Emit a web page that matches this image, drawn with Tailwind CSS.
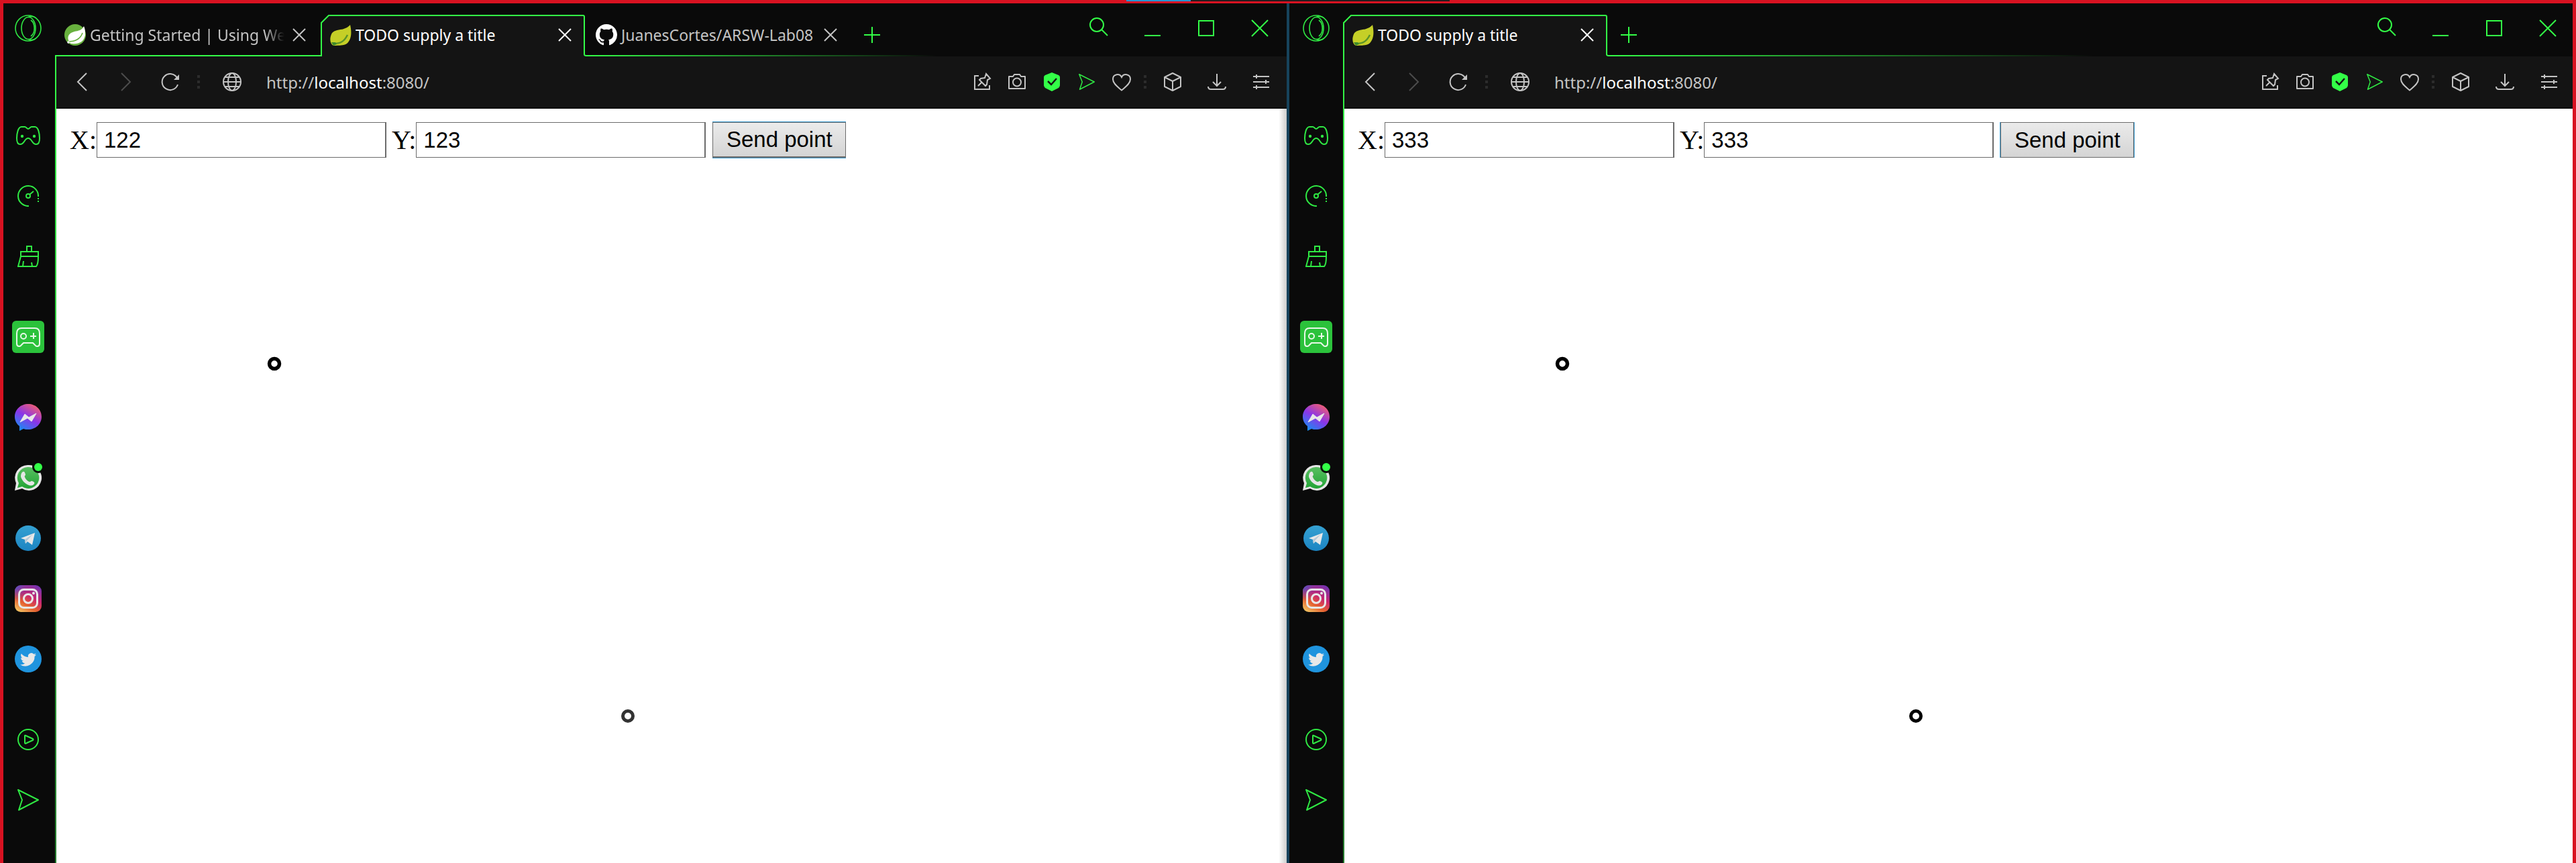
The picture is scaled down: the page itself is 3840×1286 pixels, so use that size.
<!DOCTYPE html>
<html lang="en">
<head>
<meta charset="utf-8">
<title>TODO supply a title</title>
<script src="https://cdn.jsdelivr.net/npm/@tailwindcss/browser@4"></script>
</head>
<body class="bg-[#0a0a0a]">
<svg class="absolute w-0 h-0" aria-hidden="true">
  <defs>
    <linearGradient id="msg" x1="0.2" y1="1" x2="0.8" y2="0"><stop offset="0" stop-color="#1292f5"/><stop offset=".5" stop-color="#8a35e8"/><stop offset="1" stop-color="#f8616a"/></linearGradient>
    <linearGradient id="wa" x1="0" y1="0" x2="0" y2="1"><stop offset="0" stop-color="#5abf62"/><stop offset="1" stop-color="#22a435"/></linearGradient>
    <linearGradient id="tg" x1="0" y1="0" x2="0" y2="1"><stop offset="0" stop-color="#35a1d2"/><stop offset="1" stop-color="#1c84c2"/></linearGradient>
    <linearGradient id="ig" x1="0.2" y1="1" x2="0.8" y2="0"><stop offset="0" stop-color="#f2c060"/><stop offset=".3" stop-color="#e5602f"/><stop offset=".6" stop-color="#c9266f"/><stop offset="1" stop-color="#7433b0"/></linearGradient>
    <radialGradient id="ig2" cx="0" cy="0" r=".6"><stop offset="0" stop-color="#3f5fd0"/><stop offset="1" stop-color="#7433b0" stop-opacity="0"/></radialGradient>
  </defs>
  <symbol id="i-opera" viewBox="0 0 40 40"><g fill="none" stroke="currentColor" stroke-width="1.6"><circle cx="20" cy="20" r="19"/><ellipse cx="20.500" cy="20" rx="10.500" ry="16.500"/><path d="M20 3.500c5-2 9-1 12 1.500M20 36.500c5 2 9 1 12-1.500M24 8c7 5 7 19 0 24"/></g></symbol>
  <symbol id="i-gx" viewBox="0 0 36 28"><path fill="none" stroke="currentColor" stroke-width="2" d="M8 1h5c2 0 3 3 5 3s3-3 5-3h5c5 0 7 10 7 17 0 6-2 9-5 9-7 0-6-9-12-9s-5 9-12 9c-3 0-5-3-5-9C1 11 3 1 8 1z"/><circle cx="9" cy="15" r="2.200" fill="currentColor"/><circle cx="27" cy="15" r="2.200" fill="currentColor"/></symbol>
  <symbol id="i-gauge" viewBox="0 0 32 32"><g fill="none" stroke="currentColor" stroke-width="2"><path d="M17 31A15 15 0 1 1 31 17"/><circle cx="16" cy="16" r="3"/><path d="M18 14l6-5M31 19v2M31 23v2"/></g></symbol>
  <symbol id="i-broom" viewBox="0 0 32 32"><g fill="none" stroke="currentColor" stroke-width="2"><path d="M14 9V1h7v8M5 16V9h26v7zM5 16L1 31h27c3-3 3-10 3-15M8 31l1-8M22 31l-1-6"/></g></symbol>
  <symbol id="i-pad" viewBox="0 0 36 29"><g fill="none" stroke="currentColor" stroke-width="2"><path d="M8 1h20c5 0 7 3 7 8v15c0 5-5 5-7 2l-3-3H11l-3 3c-2 3-7 3-7-2V9c0-5 2-8 7-8z"/><circle cx="11" cy="13" r="4"/><path d="M26 8v9M21 13h9"/></g></symbol>
  <symbol id="i-msg" viewBox="0 0 40 40"><path fill="url(#msg)" d="M20 0C9 0 0 8 0 19c0 6 3 11 7 14v7l6-3c2 1 5 1 7 1 11 0 20-8 20-19S31 0 20 0z"/><path d="M8 27l7-12 6 5 11-6-7 12-6-5z" fill="#e8e8e8" stroke="#e8e8e8" stroke-linejoin="round"/></symbol>
  <symbol id="i-wa" viewBox="0 0 42 42"><path fill="#e6e6e6" d="M20 4a19 19 0 0 0-17 27L1 42l11-3A19 19 0 1 0 20 4z"/><path fill="url(#wa)" d="M20 7A16 16 0 0 0 7 31l-2 7 7-2A16 16 0 1 0 20 7z"/><path fill="#e6e6e6" d="M13 14c2-1 3 0 4 4 0 2-2 2-1 4 1 3 4 6 7 7 2 0 2-2 4-1 3 1 4 2 3 4-2 3-5 3-8 2-6-2-11-8-12-13 0-3 1-6 3-7z"/><circle cx="36" cy="7" r="9" fill="#0a0a0a"/><circle cx="36" cy="7" r="6" fill="#33ff47"/></symbol>
  <symbol id="i-tg" viewBox="0 0 38 38"><circle cx="19" cy="19" r="19" fill="url(#tg)"/><path fill="#e8e8e8" d="M8 19l21-8-4 18-7-5-3 3-1-6z"/><path fill="#b8cad8" d="M14 21l12-8-9 10-2 4z"/></symbol>
  <symbol id="i-ig" viewBox="0 0 40 40"><rect width="40" height="40" rx="9" fill="url(#ig)"/><rect width="40" height="40" rx="9" fill="url(#ig2)"/><g fill="none" stroke="#e8e8e8" stroke-width="3"><rect x="6.500" y="6.500" width="27" height="27" rx="7"/><circle cx="20" cy="20" r="6.500"/></g><circle cx="28" cy="12" r="2" fill="#e8e8e8"/></symbol>
  <symbol id="i-tw" viewBox="0 0 40 40"><circle cx="20" cy="20" r="20" fill="#1f94de"/><path fill="#e8e8e8" transform="translate(8.500 8.500)" d="M23.600 4.900a9.700 9.700 0 0 1-2.800.8 4.900 4.900 0 0 0 2.200-2.700 9.900 9.900 0 0 1-3.100 1.200 4.900 4.900 0 0 0-8.400 4.500A14 14 0 0 1 1.300 3.500a4.900 4.900 0 0 0 1.500 6.600 4.900 4.900 0 0 1-2.200-.6 4.900 4.900 0 0 0 4 4.900 4.900 4.900 0 0 1-2.300.1 4.900 4.900 0 0 0 4.600 3.400A9.900 9.900 0 0 1-.4 19.900 14 14 0 0 0 21.100 7.500a10 10 0 0 0 2.500-2.600z"/></symbol>
  <symbol id="i-play" viewBox="0 0 32 32"><g fill="none" stroke="currentColor" stroke-width="2" stroke-linejoin="round"><circle cx="16" cy="16" r="15"/><path d="M11 10.500q0-1 1-.5l11 5q1 1 0 2l-11 5q-1 0-1-1z"/></g></symbol>
  <symbol id="i-send" viewBox="0 0 32 32"><path fill="none" stroke="currentColor" stroke-width="2" stroke-linejoin="round" d="M1 1l30 15L2 31l5-15z"/></symbol>
  <symbol id="i-spring" viewBox="0 0 32 32"><circle cx="16" cy="16" r="16" fill="#68b13e"/><path fill="#fff" d="M29 3c-3 6-8 7-14 8C7 13 4 18 6 24c2 4 3 5 5 5 10 1 18-2 20-13 0-5 0-9-2-13z"/><path fill="none" stroke="#68b13e" stroke-width="1.600" d="M5 26c11 0 19-4 22-13"/><circle cx="6" cy="27" r="1.800" fill="#fff"/></symbol>
  <symbol id="i-leaf" viewBox="0 0 32 32"><path fill="#c5cf27" d="M30 1c2 9 3 21-5 28-4 3-14 3-20 3C0 29-1 22 2 15 6 6 22 11 30 1z"/><path fill="none" stroke="#5c9428" stroke-width="2.500" d="M4 29c12 0 17-3 22-13"/><path fill="#3f8a2b" d="M2 27h6l2 3-5 2z"/></symbol>
  <symbol id="i-gh" viewBox="0 0 16 16"><path fill="#fff" d="M8 0C3.580 0 0 3.580 0 8c0 3.540 2.290 6.530 5.470 7.590.4.070.55-.17.55-.38 0-.19-.01-.82-.01-1.490-2.010.37-2.530-.49-2.690-.94-.09-.23-.48-.94-.82-1.130-.28-.15-.68-.52-.01-.53.63-.01 1.080.58 1.230.82.72 1.210 1.870.87 2.330.66.070-.52.28-.87.51-1.070-1.780-.2-3.640-.89-3.640-3.950 0-.87.31-1.590.82-2.150-.08-.2-.36-1.020.08-2.120 0 0 .67-.21 2.200.82.64-.18 1.320-.27 2-.27s1.360.09 2 .27c1.530-1.040 2.200-.82 2.200-.82.44 1.100.16 1.920.08 2.120.51.56.82 1.270.82 2.150 0 3.070-1.870 3.750-3.650 3.950.29.25.54.73.54 1.480 0 1.070-.01 1.930-.01 2.200 0 .21.15.46.55.38A8.010 8.010 0 0 0 16 8c0-4.420-3.580-8-8-8z"/></symbol>
  <symbol id="i-x" viewBox="0 0 20 20"><path fill="none" stroke="currentColor" stroke-width="2" d="M1 1l18 18M19 1L1 19"/></symbol>
  <symbol id="i-plus" viewBox="0 0 24 24"><path fill="none" stroke="currentColor" stroke-width="2" d="M12 0v24M0 12h24"/></symbol>
  <symbol id="i-search" viewBox="0 0 28 28"><g fill="none" stroke="currentColor" stroke-width="2"><circle cx="11" cy="11" r="10"/><path d="M18 18l9 9"/></g></symbol>
  <symbol id="i-min" viewBox="0 0 24 24"><path fill="none" stroke="currentColor" stroke-width="2" d="M0 23h24"/></symbol>
  <symbol id="i-max" viewBox="0 0 24 24"><path fill="none" stroke="currentColor" stroke-width="2" d="M1 1h22v22H1z"/></symbol>
  <symbol id="i-close" viewBox="0 0 26 26"><path fill="none" stroke="currentColor" stroke-width="2" d="M1 1l24 24M25 1L1 25"/></symbol>
  <symbol id="i-back" viewBox="0 0 28 28"><path fill="none" stroke="currentColor" stroke-width="2" d="M21 1L8 14l13 13"/></symbol>
  <symbol id="i-fwd" viewBox="0 0 28 28"><path fill="none" stroke="currentColor" stroke-width="2" d="M7 1l13 13L7 27"/></symbol>
  <symbol id="i-reload" viewBox="0 0 28 28"><path fill="none" stroke="currentColor" stroke-width="2" d="M25 18A12 12 0 1 1 24 8"/><path fill="currentColor" d="M27 3v8h-8z"/></symbol>
  <symbol id="i-globe" viewBox="0 0 28 28"><g fill="none" stroke="currentColor" stroke-width="2"><circle cx="14" cy="14" r="13"/><ellipse cx="14" cy="14" rx="6" ry="13"/><path d="M1 14h26M3 7h22M3 21h22"/></g></symbol>
  <symbol id="i-pin" viewBox="0 0 28 28"><path fill="none" stroke="currentColor" stroke-width="2" d="M9 5H3v20h22v-6M8 20l5-5M20 2l6 7-4 2-1 7-2 2-9-9 2-2 6-1z"/></symbol>
  <symbol id="i-cam" viewBox="0 0 28 28"><g fill="none" stroke="currentColor" stroke-width="2" stroke-linejoin="round"><path d="M2 6h6l2-3h8l2 3h6v18H2z"/><circle cx="14" cy="14.500" r="6"/></g></symbol>
  <symbol id="i-shield" viewBox="0 0 28 28"><path fill="currentColor" d="M14 0l10 4q2 1 2 3v12q0 2-2 4l-10 5-10-5q-2-2-2-4V7q0-2 2-3z"/><path fill="none" stroke="#141414" stroke-width="2.500" d="M8 13l5 5 8-9"/></symbol>
  <symbol id="i-heart" viewBox="0 0 28 28"><path fill="none" stroke="currentColor" stroke-width="2" d="M14 7C11 1 1 2 1 10c0 7 8 12 13 16.500C19 22 27 17 27 10c0-8-10-9-13-3z"/></symbol>
  <symbol id="i-cube" viewBox="0 0 28 28"><path fill="none" stroke="currentColor" stroke-width="2" stroke-linejoin="round" d="M14 1l12 6v14l-12 6-12-6V7zM2 7l12 6 12-6M14 13v14"/></symbol>
  <symbol id="i-down" viewBox="0 0 28 28"><path fill="none" stroke="currentColor" stroke-width="2" d="M14 2v18M8 14l6 6 6-6M1 21q0 4 4 4h18q4 0 4-4"/></symbol>
  <symbol id="i-sliders" viewBox="0 0 28 28"><path fill="none" stroke="currentColor" stroke-width="2" d="M2 6h24M2 14h24M2 22h24M7 3v6M21 11v6M7 19v6"/></symbol>
  <symbol id="i-dots" viewBox="0 0 4 20"><path fill="#2c2c2c" d="M0 0h4v4H0zM0 8h4v4H0zM0 16h4v4H0z"/></symbol>
</svg>

<div class="relative grid grid-cols-2 min-h-screen text-[#33ff47] font-['Noto_Sans',sans-serif] text-[23px]">

  <!-- first window -->
  <section class="flex border-x-2 border-[#17435c] bg-[#0a0a0a]">
    <aside class="w-20 shrink-0 flex flex-col items-stretch text-[#2fe843]">
      <button class="h-[84px] flex items-center justify-center" aria-label="Menu"><svg class="size-10"><use href="#i-opera"/></svg></button>
      <nav class="mt-[73px] flex flex-col gap-[30px]" data-dock></nav>
    </aside>
    <div class="w-[2px] shrink-0 flex flex-col"><div class="h-[82px] shrink-0"></div><div class="grow bg-linear-to-b from-[#33ff47] to-[#247a2d]"></div></div>
    <div class="grow min-w-0 flex flex-col">
      <header class="relative h-[84px] flex items-stretch">
        <div class="absolute left-0 bottom-0 w-[397px] h-[2px] bg-[#33ff47]"></div>
        <div class="absolute left-[788px] bottom-0 w-[524px] h-[2px] bg-linear-to-r from-[#33ff47] to-[#33ff4700]"></div>
        <div class="relative w-[392px] mr-1 pt-5 pl-3 flex items-center text-[#c4c4c4]">
          <svg class="size-8 shrink-0"><use href="#i-spring"/></svg>
          <span class="ml-[6px] w-[290px] whitespace-nowrap mask-r-from-90%">Getting Started | Using Web</span>
          <button class="ml-3" aria-label="Close tab"><svg class="size-5"><use href="#i-x"/></svg></button>
        </div>
        <div class="relative w-[392px] mr-1 pt-5 pl-3 flex items-center text-white" data-active></div>
        <div class="relative w-[392px] mr-1 pt-5 pl-3 flex items-center text-[#c4c4c4]">
          <svg class="size-8 shrink-0"><use href="#i-gh"/></svg>
          <span class="ml-[6px] w-[290px] whitespace-nowrap">JuanesCortes/ARSW-Lab08</span>
          <button class="ml-3" aria-label="Close tab"><svg class="size-5"><use href="#i-x"/></svg></button>
        </div>
        <button class="ml-4 pt-5" aria-label="New tab"><svg class="size-6"><use href="#i-plus"/></svg></button>
        <div class="ml-auto flex" data-controls></div>
      </header>
      <div class="h-[78px] bg-[#141414] border-b-2 border-[#0e0e0e] pl-[5px] pr-[5px] flex items-stretch text-[#c4c4c4]" data-toolbar></div>
      <main class="relative grow bg-white text-black pt-[19px] pl-5">
        <form class="flex items-center font-['Liberation_Serif',serif] text-[40px] leading-[55px]">
          <label for="x1">X:</label><input id="x1" value="122" class="w-[432px] h-[53px] border border-r-2 border-[#6b6b6b] px-[10px] font-['Liberation_Sans',sans-serif] text-[33px]">
          <label for="y1" class="ml-2">Y:</label><input id="y1" value="123" class="w-[432px] h-[53px] border border-r-2 border-[#6b6b6b] px-[10px] font-['Liberation_Sans',sans-serif] text-[33px]">
          <button type="button" class="ml-[10px] w-[199px] h-[53px] border border-b-2 border-[#6b6b6b] shadow-[0_1px_#3b9bd0,0_-1px_#3b9bd0] bg-linear-to-b from-[#ebebeb] to-[#d4d4d4] font-['Liberation_Sans',sans-serif] text-[33px] leading-[50px]">Send point</button>
        </form>
        <svg class="absolute left-[314px] top-[369px] size-[22px]"><circle cx="11" cy="11" r="7.500" fill="none" stroke="#000" stroke-width="5.500"/></svg>
        <svg class="absolute left-[841px] top-[894px] size-[22px]"><circle cx="11" cy="11" r="7.500" fill="none" stroke="#333" stroke-width="5"/></svg>
        <div class="absolute inset-y-0 right-0 w-3 bg-linear-to-r from-transparent to-black/20"></div>
      </main>
    </div>
  </section>

  <!-- second window -->
  <section class="flex border-x-2 border-[#17435c] bg-[#0a0a0a]">
    <aside class="w-20 shrink-0 flex flex-col items-stretch text-[#2fe843]">
      <button class="h-[84px] flex items-center justify-center" aria-label="Menu"><svg class="size-10"><use href="#i-opera"/></svg></button>
      <nav class="mt-[73px] flex flex-col gap-[30px]" data-dock></nav>
    </aside>
    <div class="w-[2px] shrink-0 flex flex-col"><div class="h-[34px] shrink-0"></div><div class="grow bg-linear-to-b from-[#33ff47] to-[#247a2d]"></div></div>
    <div class="grow min-w-0 flex flex-col">
      <header class="relative h-[84px] flex items-stretch">
        <div class="absolute left-[392px] bottom-0 w-[724px] h-[2px] bg-linear-to-r from-[#33ff47] to-[#33ff4700]"></div>
        <div class="relative w-[392px] mr-1 pt-5 pl-3 flex items-center text-white" data-active></div>
        <button class="ml-4 pt-5" aria-label="New tab"><svg class="size-6"><use href="#i-plus"/></svg></button>
        <div class="ml-auto flex" data-controls></div>
      </header>
      <div class="h-[78px] bg-[#141414] border-b-2 border-[#0e0e0e] pl-[5px] pr-[5px] flex items-stretch text-[#c4c4c4]" data-toolbar></div>
      <main class="relative grow bg-white text-black pt-[19px] pl-5">
        <form class="flex items-center font-['Liberation_Serif',serif] text-[40px] leading-[55px]">
          <label for="x2">X:</label><input id="x2" value="333" class="w-[432px] h-[53px] border border-r-2 border-[#6b6b6b] px-[10px] font-['Liberation_Sans',sans-serif] text-[33px]">
          <label for="y2" class="ml-2">Y:</label><input id="y2" value="333" class="w-[432px] h-[53px] border border-r-2 border-[#6b6b6b] px-[10px] font-['Liberation_Sans',sans-serif] text-[33px]">
          <button type="button" class="ml-[10px] w-[199px] h-[53px] border border-[#6b6b6b] shadow-[1px_0_#3b9bd0,-1px_0_#3b9bd0] bg-linear-to-b from-[#ebebeb] to-[#d4d4d4] font-['Liberation_Sans',sans-serif] text-[33px] leading-[50px]">Send point</button>
        </form>
        <svg class="absolute left-[314px] top-[369px] size-[22px]"><circle cx="11" cy="11" r="7.500" fill="none" stroke="#000" stroke-width="5.500"/></svg>
        <svg class="absolute left-[841px] top-[894px] size-[22px]"><circle cx="11" cy="11" r="7.500" fill="none" stroke="#000" stroke-width="5"/></svg>
      </main>
    </div>
  </section>

  <!-- sharing frame over both windows -->
  <div class="absolute inset-0 border-[#d81221] border-x-[5px] border-t-[5px] pointer-events-none"></div>
  <div class="absolute top-0 left-[1679px] h-[2px] w-[482px] bg-[#241c1e]"><div class="h-full w-24 bg-[#2795d3]"></div></div>
</div>

<template id="dock">
  <div class="flex flex-col">
    <button class="h-[90px] flex items-center justify-center" aria-label="GX Corner"><svg class="w-9 h-7"><use href="#i-gx"/></svg></button>
    <button class="h-[90px] flex items-center justify-center" aria-label="GX Control"><svg class="size-8"><use href="#i-gauge"/></svg></button>
    <button class="h-[90px] flex items-center justify-center" aria-label="GX Cleaner"><svg class="size-8"><use href="#i-broom"/></svg></button>
  </div>
  <button class="h-[90px] flex items-center justify-center" aria-label="Games"><span class="size-12 rounded-md bg-[#2bc23b] text-[#e8f8e8] flex items-center justify-center"><svg class="w-9 h-[29px]"><use href="#i-pad"/></svg></span></button>
  <div class="flex flex-col">
    <button class="h-[90px] flex items-center justify-center" aria-label="Messenger"><svg class="size-10"><use href="#i-msg"/></svg></button>
    <button class="h-[90px] pb-1 flex items-center justify-center" aria-label="WhatsApp"><svg class="w-[42px] h-[42px]"><use href="#i-wa"/></svg></button>
    <button class="h-[90px] flex items-center justify-center" aria-label="Telegram"><svg class="size-[38px]"><use href="#i-tg"/></svg></button>
    <button class="h-[90px] flex items-center justify-center" aria-label="Instagram"><svg class="size-10"><use href="#i-ig"/></svg></button>
    <button class="h-[90px] flex items-center justify-center" aria-label="Twitter"><svg class="size-10"><use href="#i-tw"/></svg></button>
  </div>
  <div class="flex flex-col">
    <button class="h-[90px] flex items-center justify-center" aria-label="Player"><svg class="size-8"><use href="#i-play"/></svg></button>
    <button class="h-[90px] flex items-center justify-center" aria-label="My Flow"><svg class="size-8"><use href="#i-send"/></svg></button>
  </div>
</template>

<template id="active">
  <svg class="absolute -left-[2px] top-[22px] w-[396px] h-[62px]" viewBox="0 0 396 62"><path fill="#141414" d="M1 62V12L12 1h380v60h4v1z"/><path fill="none" stroke="#33ff47" stroke-width="2" d="M0 61h1V12L12 1h379q2 0 2 2v56q0 2 3 2"/></svg>
  <svg class="relative size-8 shrink-0"><use href="#i-leaf"/></svg>
  <span class="relative ml-[6px] w-[290px] whitespace-nowrap">TODO supply a title</span>
  <button class="relative ml-3" aria-label="Close tab"><svg class="size-5"><use href="#i-x"/></svg></button>
</template>

<template id="controls">
  <button class="w-20 pb-1 flex items-center justify-center" aria-label="Search tabs"><svg class="size-7"><use href="#i-search"/></svg></button>
  <button class="w-20 flex items-center justify-center" aria-label="Minimize"><svg class="size-6"><use href="#i-min"/></svg></button>
  <button class="w-20 flex items-center justify-center" aria-label="Maximize"><svg class="size-6"><use href="#i-max"/></svg></button>
  <button class="w-20 flex items-center justify-center" aria-label="Close"><svg class="size-[26px]"><use href="#i-close"/></svg></button>
</template>

<template id="toolbar">
  <button class="w-[66px] flex items-center justify-center" aria-label="Back"><svg class="size-7"><use href="#i-back"/></svg></button>
  <button class="w-[66px] flex items-center justify-center text-[#4c4c4c]" aria-label="Forward"><svg class="size-7"><use href="#i-fwd"/></svg></button>
  <button class="w-[66px] flex items-center justify-center" aria-label="Reload"><svg class="size-7"><use href="#i-reload"/></svg></button>
  <span class="w-[18px] flex items-center justify-center"><svg class="w-1 h-5"><use href="#i-dots"/></svg></span>
  <button class="w-[82px] flex items-center justify-center" aria-label="Site information"><svg class="size-7"><use href="#i-globe"/></svg></button>
  <a href="http://localhost:8080/" class="ml-[10px] pt-[2px] flex items-center text-2xl">http://<span class="text-white">localhost</span>:8080/</a>
  <div class="ml-auto flex">
    <button class="w-[52px] flex items-center justify-center" aria-label="Pinboard"><svg class="size-7"><use href="#i-pin"/></svg></button>
    <button class="w-[52px] flex items-center justify-center" aria-label="Snapshot"><svg class="size-7"><use href="#i-cam"/></svg></button>
    <button class="w-[52px] flex items-center justify-center text-[#33ff47]" aria-label="Ad blocker"><svg class="size-7"><use href="#i-shield"/></svg></button>
    <button class="w-[52px] flex items-center justify-center text-[#2fe843]" aria-label="Send to My Flow"><svg class="size-6"><use href="#i-send"/></svg></button>
    <button class="w-[52px] flex items-center justify-center" aria-label="Bookmark"><svg class="size-7"><use href="#i-heart"/></svg></button>
    <span class="w-[17px] flex items-center justify-center"><svg class="w-1 h-5"><use href="#i-dots"/></svg></span>
    <button class="w-[66px] flex items-center justify-center" aria-label="Extensions"><svg class="size-7"><use href="#i-cube"/></svg></button>
    <button class="w-[66px] flex items-center justify-center" aria-label="Downloads"><svg class="size-7"><use href="#i-down"/></svg></button>
    <button class="w-[66px] flex items-center justify-center" aria-label="Easy setup"><svg class="size-7"><use href="#i-sliders"/></svg></button>
  </div>
</template>

<script>
  for (const name of ['dock', 'active', 'controls', 'toolbar']) {
    const template = document.getElementById(name);
    document.querySelectorAll('[data-' + name + ']').forEach(el => el.append(template.content.cloneNode(true)));
  }
</script>
</body>
</html>
